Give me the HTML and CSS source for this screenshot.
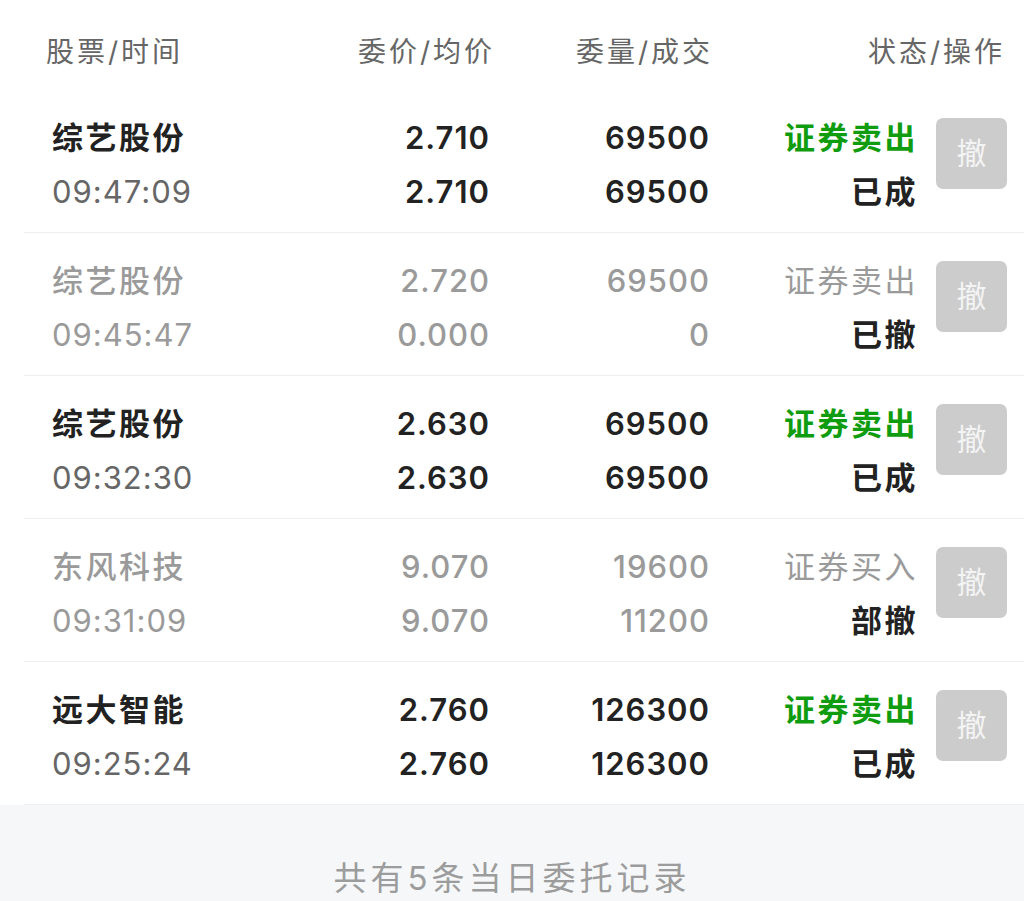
FILE: index.html
```html
<!DOCTYPE html>
<html lang="zh-CN">
<head>
  <meta charset="UTF-8" />
  <meta name="viewport" content="width=device-width, initial-scale=1.0"/>
  <title>当日委托</title>
  <link rel="stylesheet" href="styles.css">
</head>
<body>
  <div class="head">
    <div class="h-name">股票/时间</div>
    <div class="h-price">委价/均价</div>
    <div class="h-qty">委量/成交</div>
    <div class="h-state">状态/操作</div>
  </div>

  <div class="list">
    <div class="row">
      <div class="c-name"><div class="main">综艺股份</div><div class="time">09:47:09</div></div>
      <div class="c-price"><div>2.710</div><div>2.710</div></div>
      <div class="c-qty"><div>69500</div><div>69500</div></div>
      <div class="c-state"><div class="green">证券卖出</div><div class="dark">已成</div></div>
      <div class="btn">撤</div>
    </div>

    <div class="row off">
      <div class="c-name"><div class="main">综艺股份</div><div class="time">09:45:47</div></div>
      <div class="c-price"><div>2.720</div><div>0.000</div></div>
      <div class="c-qty"><div>69500</div><div>0</div></div>
      <div class="c-state"><div>证券卖出</div><div class="dark">已撤</div></div>
      <div class="btn">撤</div>
    </div>

    <div class="row">
      <div class="c-name"><div class="main">综艺股份</div><div class="time">09:32:30</div></div>
      <div class="c-price"><div>2.630</div><div>2.630</div></div>
      <div class="c-qty"><div>69500</div><div>69500</div></div>
      <div class="c-state"><div class="green">证券卖出</div><div class="dark">已成</div></div>
      <div class="btn">撤</div>
    </div>

    <div class="row off">
      <div class="c-name"><div class="main">东风科技</div><div class="time">09:31:09</div></div>
      <div class="c-price"><div>9.070</div><div>9.070</div></div>
      <div class="c-qty"><div>19600</div><div>11200</div></div>
      <div class="c-state"><div>证券买入</div><div class="dark">部撤</div></div>
      <div class="btn">撤</div>
    </div>

    <div class="row">
      <div class="c-name"><div class="main">远大智能</div><div class="time">09:25:24</div></div>
      <div class="c-price"><div>2.760</div><div>2.760</div></div>
      <div class="c-qty"><div>126300</div><div>126300</div></div>
      <div class="c-state"><div class="green">证券卖出</div><div class="dark">已成</div></div>
      <div class="btn">撤</div>
    </div>
  </div>

  <div class="foot">共有5条当日委托记录</div>
</body>
</html>
```

FILE: styles.css
```css
body {
  margin: 0;
  background: #fff;
  font-family: Inter, "Noto Sans CJK SC", sans-serif;
  color: #222;
}

.head {
  display: flex;
  height: 90px;
  align-items: center;
  padding: 10px 22px 0 46px;
  box-sizing: border-box;
  font-size: 28px;
  color: #666;
  letter-spacing: 3px;
}

.h-name { width: 254px; }
.h-price { width: 195px; text-align: right; }
.h-qty { width: 221px; text-align: right; }
.h-state { flex: 1; text-align: right; }

.head div:not(.h-name) {
  margin-right: -3px;
}

.list {
  margin-left: 24px;
}

.row {
  display: flex;
  padding: 21px 17px 13px 0;
  border-bottom: 1px solid #eeeeee;
  font-size: 31px;
  line-height: 54px;
  font-weight: 600;
  letter-spacing: 1px;
}

.c-name {
  width: 248px;
  padding-left: 28px;
}

.c-name .main {
  letter-spacing: 2.5px;
}

.c-name .time {
  font-weight: 400;
  color: #666;
}

.c-price {
  width: 190px;
  text-align: right;
}

.c-qty {
  width: 220px;
  text-align: right;
}

.c-state {
  width: 208px;
  text-align: right;
  letter-spacing: 2.5px;
  margin-right: -3px;
}

.green {
  color: #0f9c0f;
}

.row.off {
  color: #9a9a9a;
  font-weight: 500;
}

.row.off .time {
  color: #9a9a9a;
  font-weight: 400;
}

.row.off .c-state div:first-child {
  font-weight: 400;
}

.row .dark {
  color: #222;
  font-weight: 600;
}

.btn {
  width: 71px;
  height: 71px;
  margin: 7px 0 0 21px;
  background: #cccccc;
  border-radius: 7px;
  color: #f4f4f4;
  font-size: 30px;
  font-weight: 400;
  line-height: 71px;
  text-align: center;
  letter-spacing: 0;
}

.foot {
  background: #f6f7f9;
  height: 120px;
  padding-top: 53px;
  box-sizing: border-box;
  text-align: center;
  font-size: 33px;
  line-height: 40px;
  color: #9c9c9c;
  letter-spacing: 4px;
}
```
